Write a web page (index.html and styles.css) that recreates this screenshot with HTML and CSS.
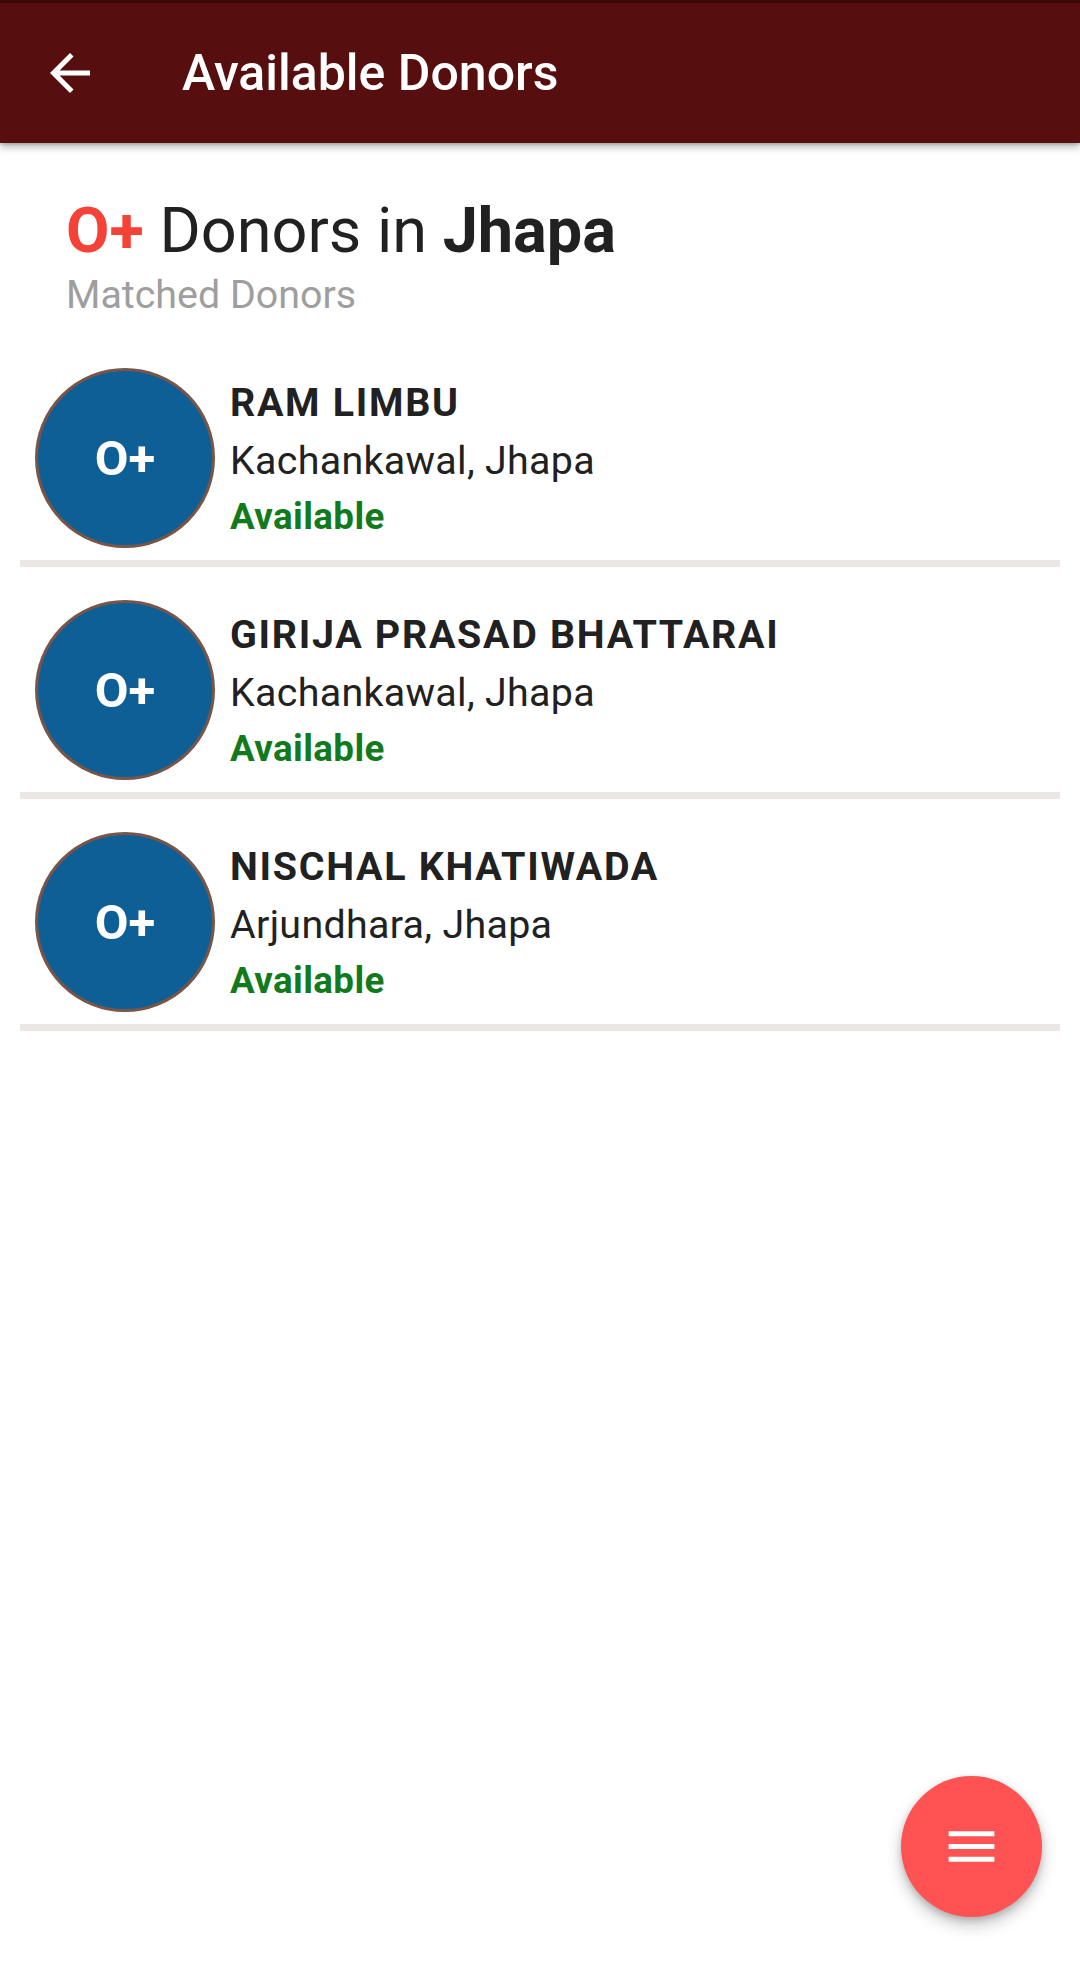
FILE: index.html
```html
<!DOCTYPE html>
<html>
<head>
<meta charset="utf-8">
<link rel="stylesheet" href="styles.css">
</head>
<body>
<div class="screen">
  <div class="status-strip"></div>
  <header class="app-bar">
    <svg class="back-icon" viewBox="0 0 24 24"><path d="M20 11H7.83l5.59-5.59L12 4l-8 8 8 8 1.41-1.41L7.83 13H20v-2z" fill="#ffffff"/></svg>
    <h1 class="app-title">Available Donors</h1>
  </header>
  <main class="content">
    <section class="summary">
      <h2 class="heading"><span class="group">O+</span> Donors in <b>Jhapa</b></h2>
      <p class="subheading">Matched Donors</p>
    </section>
    <ul class="donor-list">
      <li class="donor">
        <div class="badge">O+</div>
        <div class="info">
          <div class="name">RAM LIMBU</div>
          <div class="place">Kachankawal, Jhapa</div>
          <div class="status">Available</div>
        </div>
      </li>
      <li class="donor">
        <div class="badge">O+</div>
        <div class="info">
          <div class="name">GIRIJA PRASAD BHATTARAI</div>
          <div class="place">Kachankawal, Jhapa</div>
          <div class="status">Available</div>
        </div>
      </li>
      <li class="donor">
        <div class="badge">O+</div>
        <div class="info">
          <div class="name">NISCHAL KHATIWADA</div>
          <div class="place">Arjundhara, Jhapa</div>
          <div class="status">Available</div>
        </div>
      </li>
    </ul>
  </main>
  <button class="fab" aria-label="Menu">
    <svg class="fab-icon" viewBox="0 0 24 24"><path d="M3 18h18v-2H3v2zm0-5h18v-2H3v2zm0-7v2h18V6H3z" fill="#ffffff"/></svg>
  </button>
</div>
</body>
</html>
```
FILE: styles.css
```css
* { box-sizing: border-box; }
html, body {
  margin: 0;
  padding: 0;
  background: #ffffff;
}
body {
  font-family: Roboto, "Liberation Sans", sans-serif;
  color: #212121;
}
.screen {
  position: relative;
  width: 1080px;
  height: 1973px;
  overflow: hidden;
  background: #ffffff;
}
.status-strip {
  height: 3px;
  background: #3e0a0a;
}
.app-bar {
  position: relative;
  z-index: 2;
  height: 140px;
  background: #570e0e;
  display: flex;
  align-items: center;
  padding-left: 40px;
  box-shadow: 0 4px 8px rgba(0,0,0,0.28), 0 1px 3px rgba(0,0,0,0.2);
}
.back-icon {
  width: 60px;
  height: 60px;
  flex: none;
}
.app-title {
  margin: 0 0 0 82px;
  font-size: 50px;
  font-weight: 500;
  color: #ffffff;
  line-height: normal;
}
.content {
  padding-top: 51px;
}
.summary {
  padding-left: 66px;
}
.heading {
  margin: 0;
  font-size: 63px;
  line-height: 74px;
  font-weight: 400;
  color: #212121;
}
.heading .group {
  color: #f44336;
  font-weight: 700;
}
.heading b {
  font-weight: 700;
}
.subheading {
  margin: 4px 0 0;
  font-size: 39.4px;
  line-height: 46px;
  color: #9e9e9e;
}
.donor-list {
  list-style: none;
  margin: 17px 20px 0;
  padding: 0;
}
.donor {
  display: flex;
  align-items: flex-start;
  padding: 33px 0 12px 15px;
  border-bottom: 7px solid #ebe7e7;
}
.badge {
  width: 180px;
  height: 180px;
  flex: none;
  border-radius: 50%;
  background: #0f5f97;
  border: 3.5px solid #795548;
  display: flex;
  align-items: center;
  justify-content: center;
  color: #ffffff;
  font-size: 49px;
  font-weight: 700;
}
.info {
  margin-left: 15px;
  padding-top: 12px;
  display: flex;
  flex-direction: column;
  gap: 11.5px;
}
.name {
  font-size: 39.4px;
  line-height: 46px;
  font-weight: 700;
  letter-spacing: 1.7px;
  color: #212121;
}
.place {
  font-size: 39.4px;
  line-height: 46px;
  letter-spacing: 0.3px;
  color: #212121;
}
.status {
  font-size: 36.75px;
  line-height: 43px;
  font-weight: 700;
  letter-spacing: 0.4px;
  color: #117a1c;
}
.fab {
  position: absolute;
  left: 901px;
  top: 1776px;
  width: 141px;
  height: 141px;
  border-radius: 50%;
  border: none;
  padding: 0;
  background: #ff5252;
  display: flex;
  align-items: center;
  justify-content: center;
  box-shadow: 0 8px 16px rgba(0,0,0,0.22), 0 3px 6px rgba(0,0,0,0.16);
}
.fab-icon {
  width: 61px;
  height: 61px;
}
```
